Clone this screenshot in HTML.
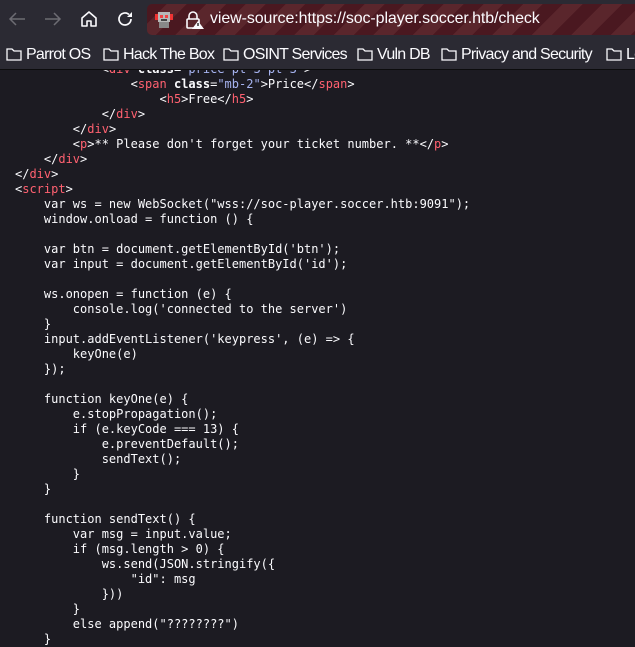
<!DOCTYPE html>
<html><head><meta charset="utf-8"><style>
*{margin:0;padding:0;box-sizing:border-box}
html,body{width:635px;height:635px;overflow:hidden;background:#1c1b22}
#top{position:absolute;left:0;top:0;width:635px;height:38px;background:#2b2a33;z-index:2}
#url{position:absolute;left:147px;top:4px;width:500px;height:31px;border-radius:5px;
background:repeating-linear-gradient(135deg,#4a1820 0 14px,#5a262c 14px 28px);}
#url span{position:absolute;left:63px;top:6px;font:16px "Liberation Sans",sans-serif;color:#fbfbfe;letter-spacing:-0.1px}
#bm{position:absolute;left:0;top:38px;width:635px;height:32px;background:#2b2a33;z-index:2;border-bottom:1px solid #0c0c0d;
font:16px "Liberation Sans",sans-serif;color:#fbfbfe;white-space:nowrap}
.b{position:absolute;top:8px;letter-spacing:-0.75px}
.b svg{vertical-align:-2px;margin-right:4px}
pre{position:absolute;left:15px;top:62px;font:12px "DejaVu Sans Mono",monospace;line-height:15px;color:#fbfbfe;z-index:1}
.t{color:#ff6170}.a{color:#fbfbfe;font-weight:bold}.v{color:#a6b3f0}
</style></head><body>
<div id="top">
<svg style="position:absolute;left:8px;top:11px" width="18" height="16" viewBox="0 0 18 16"><path d="M17 8H2M8 2L2 8l6 6" stroke="#6d6c73" stroke-width="1.5" fill="none"/></svg>
<svg style="position:absolute;left:44px;top:11px" width="18" height="16" viewBox="0 0 18 16"><path d="M1 8h15M10 2l6 6-6 6" stroke="#6d6c73" stroke-width="1.5" fill="none"/></svg>
<svg style="position:absolute;left:80px;top:10px" width="18" height="18" viewBox="0 0 18 18"><path d="M2 8L9 2l7 6v8h-5v-5H7v5H2z" stroke="#fbfbfe" stroke-width="1.6" fill="none" stroke-linejoin="round"/></svg>
<svg style="position:absolute;left:116px;top:10px" width="18" height="18" viewBox="0 0 18 18"><path d="M15 9a6 6 0 1 1-2-4.5" stroke="#fbfbfe" stroke-width="1.7" fill="none"/><path d="M16 2v5h-5z" fill="#fbfbfe"/></svg>
<div id="url">
<svg style="position:absolute;left:8px;top:6px" width="18" height="19" viewBox="0 0 18 19"><rect x="3" y="2" width="12" height="10" fill="#b8b8b8"/><rect x="5" y="5" width="3" height="3" fill="#e44"/><rect x="10" y="5" width="3" height="3" fill="#e44"/><rect x="0" y="4" width="3" height="6" fill="#e33"/><rect x="15" y="4" width="3" height="6" fill="#e33"/><rect x="4" y="12" width="10" height="6" fill="#888"/><rect x="6" y="9" width="6" height="2" fill="#444"/></svg>
<svg style="position:absolute;left:37px;top:6px" width="20" height="20" viewBox="0 0 20 20"><path d="M5 9V6a4 4 0 0 1 8 0v3" stroke="#fbfbfe" stroke-width="1.6" fill="none"/><rect x="3" y="9" width="12" height="9" rx="1" stroke="#fbfbfe" stroke-width="1.6" fill="none"/><path d="M14 11l6 8h-12z" fill="#fbfbfe"/><rect x="13.4" y="13" width="1.2" height="3" fill="#000"/></svg>
<span>view-source:https://soc-player.soccer.htb/check</span>
</div>
</div>
<div id="bm">
<span class="b" style="left:6px"><svg width="16" height="14" viewBox="0 0 16 14"><path d="M1 2h5l2 2h7v9H1z" stroke="#fbfbfe" stroke-width="1.3" fill="none"/></svg>Parrot OS</span>
<span class="b" style="left:103px"><svg width="16" height="14" viewBox="0 0 16 14"><path d="M1 2h5l2 2h7v9H1z" stroke="#fbfbfe" stroke-width="1.3" fill="none"/></svg>Hack The Box</span>
<span class="b" style="left:223px"><svg width="16" height="14" viewBox="0 0 16 14"><path d="M1 2h5l2 2h7v9H1z" stroke="#fbfbfe" stroke-width="1.3" fill="none"/></svg>OSINT Services</span>
<span class="b" style="left:357px"><svg width="16" height="14" viewBox="0 0 16 14"><path d="M1 2h5l2 2h7v9H1z" stroke="#fbfbfe" stroke-width="1.3" fill="none"/></svg>Vuln DB</span>
<span class="b" style="left:441px"><svg width="16" height="14" viewBox="0 0 16 14"><path d="M1 2h5l2 2h7v9H1z" stroke="#fbfbfe" stroke-width="1.3" fill="none"/></svg>Privacy and Security</span>
<span class="b" style="left:606px"><svg width="16" height="14" viewBox="0 0 16 14"><path d="M1 2h5l2 2h7v9H1z" stroke="#fbfbfe" stroke-width="1.3" fill="none"/></svg>Le</span>
</div>
<pre>            &lt;<span class="t">div</span> <span class="a">class</span>=<span class="v">"price pt-3 pt-3"</span>&gt;
                &lt;<span class="t">span</span> <span class="a">class</span>=<span class="v">"mb-2"</span>&gt;Price&lt;/<span class="t">span</span>&gt;
                    &lt;<span class="t">h5</span>&gt;Free&lt;/<span class="t">h5</span>&gt;
            &lt;/<span class="t">div</span>&gt;
        &lt;/<span class="t">div</span>&gt;
        &lt;<span class="t">p</span>&gt;** Please don't forget your ticket number. **&lt;/<span class="t">p</span>&gt;
    &lt;/<span class="t">div</span>&gt;
&lt;/<span class="t">div</span>&gt;
&lt;<span class="t">script</span>&gt;
    var ws = new WebSocket("wss://soc-player.soccer.htb:9091");
    window.onload = function () {

    var btn = document.getElementById('btn');
    var input = document.getElementById('id');

    ws.onopen = function (e) {
        console.log('connected to the server')
    }
    input.addEventListener('keypress', (e) =&gt; {
        keyOne(e)
    });

    function keyOne(e) {
        e.stopPropagation();
        if (e.keyCode === 13) {
            e.preventDefault();
            sendText();
        }
    }

    function sendText() {
        var msg = input.value;
        if (msg.length &gt; 0) {
            ws.send(JSON.stringify({
                "id": msg
            }))
        }
        else append("????????")
    }
</pre>
</body></html>
